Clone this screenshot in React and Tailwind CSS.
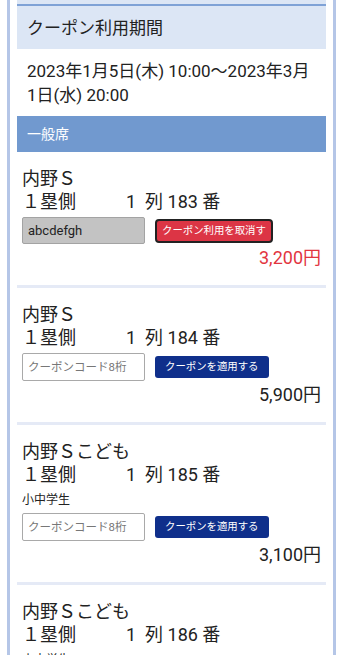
import React from 'react';

const seats = [
  { name: '内野Ｓ', side: '１塁側', row: '1', num: '183', price: '3,200円', applied: 'abcdefgh' },
  { name: '内野Ｓ', side: '１塁側', row: '1', num: '184', price: '5,900円' },
  { name: '内野Ｓこども', side: '１塁側', row: '1', num: '185', price: '3,100円', note: '小中学生' },
  { name: '内野Ｓこども', side: '１塁側', row: '1', num: '186', price: '3,100円', note: '小中学生' },
];

function SeatCard({ seat }) {
  const applied = !!seat.applied;
  return (
    <div className="border-b-[3px] border-[#e5eaf6] pl-[5px] pr-[5px] pt-[15px] pb-[15px]">
      <div className="text-[18px] leading-[23px] text-[#222]">{seat.name}</div>
      <div className="flex text-[18px] leading-[23px] text-[#222]">
        <span className="w-[104px]">{seat.side}</span>
        <span>{seat.row}&nbsp; 列 {seat.num} 番</span>
      </div>
      {seat.note && <div className="text-[12px] leading-[18px] text-[#222] mt-[5px]">{seat.note}</div>}
      <div className="flex items-center gap-[10px] mt-[4px]">
        {applied ? (
          <input
            disabled
            value={seat.applied}
            readOnly
            className="w-[123px] h-[27px] rounded-[2px] border border-[#a3a3a3] bg-[#c3c3c3] px-[5px] text-[13px] text-[#222]"
          />
        ) : (
          <input
            placeholder="クーポンコード8桁"
            className="w-[123px] h-[28px] rounded-[2px] border border-[#a9a9a9] bg-white px-[5px] text-[11.5px] text-[#222] placeholder:text-[#777]"
          />
        )}
        {applied ? (
          <button className="h-[24px] rounded-[4px] border-2 border-[#222] bg-[#dc3545] px-[5px] text-[10.4px] text-white">
            クーポン利用を取消す
          </button>
        ) : (
          <button className="h-[22px] rounded-[3px] bg-[#0f2f8b] px-[10px] text-[10.4px] text-white">
            クーポンを適用する
          </button>
        )}
      </div>
      <div className={`mt-[2px] text-right text-[18px] leading-[24px] ${applied ? 'text-[#e2353f]' : 'text-[#222]'}`}>
        {seat.price}
      </div>
    </div>
  );
}

export default function App() {
  return (
    <div
      className="bg-white px-[7px]"
      style={{ fontFamily: "Roboto, 'Noto Sans CJK JP', sans-serif" }}
    >
      <div className="border-x-[3px] border-[#b5c6e7] px-[7px]">
        <div className="h-[4px] bg-[#dce6f5]" />
        <div className="border-t-2 border-[#7fa2d6] bg-[#dce6f5] px-[10px] py-[9.5px] text-[17px] leading-[24px] text-[#222]">
          クーポン利用期間
        </div>
        <div className="px-[10px] pt-[10px] pb-[9px] text-[17px] leading-[24px] text-[#222]">
          2023年1月5日(木) 10:00～2023年3月<br />1日(水) 20:00
        </div>
        <div className="bg-[#7199cf] px-[10px] h-[36px] flex items-center text-[14px] text-white">
          一般席
        </div>
        {seats.map((s) => (
          <SeatCard key={s.num} seat={s} />
        ))}
      </div>
    </div>
  );
}
